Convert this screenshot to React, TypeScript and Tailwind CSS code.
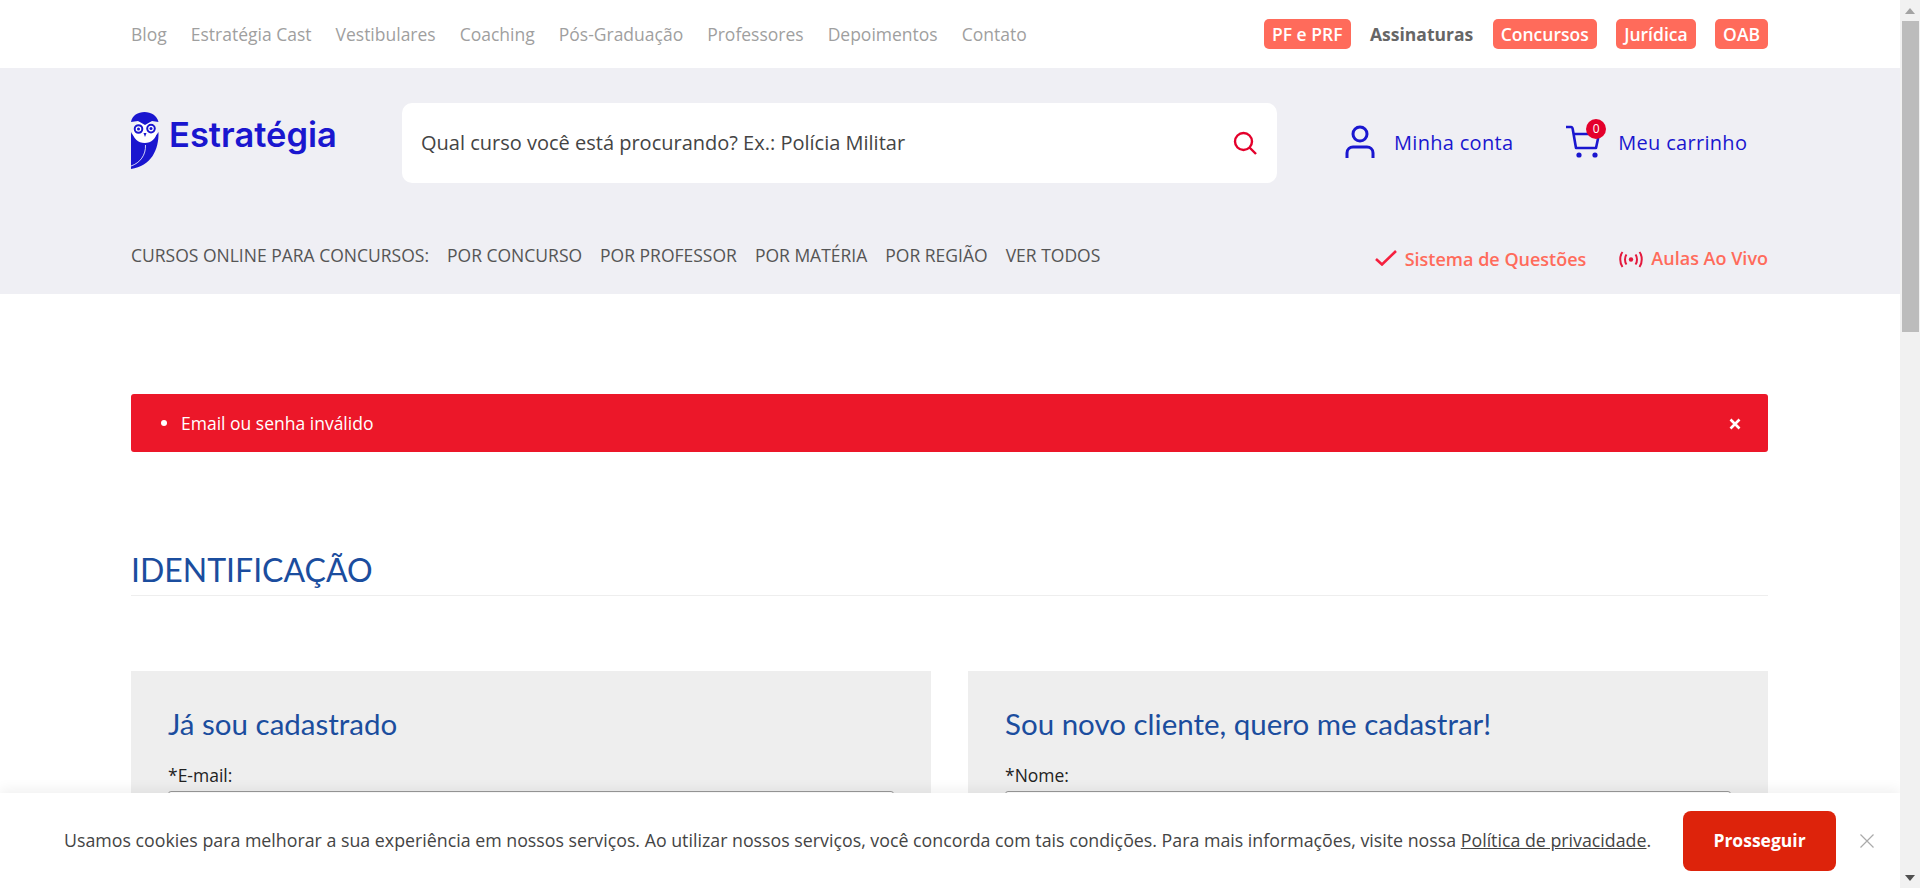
import React from "react";

const topLinks = ["Blog", "Estratégia Cast", "Vestibulares", "Coaching", "Pós-Graduação", "Professores", "Depoimentos", "Contato"];
const navLinks = ["POR CONCURSO", "POR PROFESSOR", "POR MATÉRIA", "POR REGIÃO", "VER TODOS"];

function Pill({ children }: { children: React.ReactNode }) {
  return <a className="flex h-[30px] items-center rounded-[5px] bg-[#ff6b5b] px-2 text-[17.5px] font-semibold text-white">{children}</a>;
}

function Owl() {
  return (
    <svg width="28" height="57" viewBox="0 0 28 57" className="shrink-0">
      <path d="M0 20 C4 30 22 30 27.5 20 C28 38 20 54 0 57 Z" fill="#1a16cf" />
      <ellipse cx="13.7" cy="20" rx="12" ry="11" fill="#fff" />
      <path d="M0 10 C1 3.5 7 0 13.5 0 C20 0 26 3.5 27.5 10 L21 9 L14 13 L7 9 Z" fill="#1a16cf" />
      <circle cx="7.5" cy="17" r="3.8" fill="#fff" stroke="#1a16cf" strokeWidth="2" />
      <circle cx="20" cy="16.6" r="3.8" fill="#fff" stroke="#1a16cf" strokeWidth="2" />
      <circle cx="7.5" cy="17" r="1.5" fill="#1a16cf" />
      <circle cx="20" cy="16.6" r="1.5" fill="#1a16cf" />
      <path d="M12.5 21 L14 25 L15.5 21 Z" fill="#1a16cf" />
      <path d="M14.5 33 C15 43 9 51 0 54" fill="none" stroke="#fff" strokeWidth="0.8" />
    </svg>
  );
}

function UserIcon() {
  return (
    <svg width="30" height="33" viewBox="0 0 30 33" fill="none" stroke="#1a16cf" strokeWidth="3">
      <circle cx="15" cy="9" r="7" />
      <path d="M2 33 V28 C2 24 5 22 8 22 H22 C25 22 28 24 28 28 V33" />
    </svg>
  );
}

function CartIcon() {
  return (
    <svg width="34" height="33" viewBox="0 0 34 33" fill="none" stroke="#1a16cf" strokeWidth="2.6">
      <path d="M0 2 H5 C6 2 6.5 3 6.7 4 L10 23 H30 L33 9 H8" strokeLinejoin="round" />
      <circle cx="13" cy="30" r="2.6" fill="#1a16cf" stroke="none" />
      <circle cx="29" cy="30" r="2.6" fill="#1a16cf" stroke="none" />
    </svg>
  );
}

function Field({ title, label }: { title: string; label: string }) {
  return (
    <div className="h-[260px] bg-[#eeeeee] px-[37px] pt-[33px]">
      <h2 className="font-['Lato',sans-serif] text-[29.5px] leading-[40px] text-[#1b4d9e]">{title}</h2>
      <label className="mb-[4px] mt-[19px] block text-[17.5px] leading-[24px] text-[#222]">{label}</label>
      <div className="h-[42px] rounded-[3px] border border-[#999] bg-white" />
    </div>
  );
}

export default function App() {
  return (
    <div className="flex h-[888px] w-full overflow-hidden bg-white font-['Open_Sans',sans-serif]">
      <div className="relative h-full min-w-0 flex-1 overflow-hidden">
        <div className="flex h-[68px] items-center justify-between pl-[131px] pr-[132px]">
          <nav className="flex gap-[24px] text-[17.5px] text-[#9f9f9f]">
            {topLinks.map((l) => (
              <a key={l}>{l}</a>
            ))}
          </nav>
          <div className="flex items-center gap-[19.5px]">
            <Pill>PF e PRF</Pill>
            <a className="text-[17.5px] font-bold text-[#666]">Assinaturas</a>
            <Pill>Concursos</Pill>
            <Pill>Jurídica</Pill>
            <Pill>OAB</Pill>
          </div>
        </div>

        <header className="h-[226px] bg-[#efeff4] pl-[131px] pr-[132px]">
          <div className="flex h-[174px] items-start pt-[35px]">
            <a className="flex w-[271px] items-start gap-[10px] pt-[9px]">
              <Owl />
              <span className="mt-[3px] font-['Inter',sans-serif] text-[34.5px] font-semibold leading-[40px] text-[#1a16cf]">Estratégia</span>
            </a>
            <div className="flex h-[80px] w-[875px] items-center justify-between rounded-[10px] bg-white pl-[19px] pr-[20px]">
              <span className="text-[20px] text-[#444]">Qual curso você está procurando? Ex.: Polícia Militar</span>
              <svg width="24" height="24" viewBox="0 0 24 24" fill="none" stroke="#e4002b" strokeWidth="2.4">
                <circle cx="10.5" cy="10.5" r="8.5" />
                <path d="M16.5 16.5 L23 23" />
              </svg>
            </div>
            <a className="ml-[68px] flex items-center gap-[19px] pt-[22px] text-[20px] font-medium tracking-[0.3px] text-[#1a16cf]">
              <UserIcon />
              <span className="mt-[2px]">Minha conta</span>
            </a>
            <a className="relative ml-[53px] flex items-center gap-[18px] pt-[22px] text-[20px] font-medium tracking-[0.3px] text-[#1a16cf]">
              <CartIcon />
              <span className="mt-[2px]">Meu carrinho</span>
              <span className="absolute left-[20px] top-[16px] flex h-5 w-5 items-center justify-center rounded-full bg-[#e4002b] text-xs font-normal tracking-normal text-white">0</span>
            </a>
          </div>
          <div className="flex items-center justify-between">
            <nav className="flex gap-[18px] pb-[8px] text-[17.5px] text-[#555]">
              <span>CURSOS ONLINE PARA CONCURSOS:</span>
              {navLinks.map((l) => (
                <a key={l}>{l}</a>
              ))}
            </nav>
            <div className="flex items-center text-[18px] font-semibold text-[#ff6b5b]">
              <svg width="22" height="16" viewBox="0 0 22 16" fill="none" stroke="#f5203e" strokeWidth="2.6" className="mb-[3px] mr-[8px]">
                <path d="M1 9 L7 14.5 L21 1" />
              </svg>
              <span>Sistema de Questões</span>
              <svg width="24" height="17" viewBox="0 0 24 17" fill="none" stroke="#e4183c" strokeWidth="2" className="ml-[33px] mr-[8px]">
                <circle cx="12" cy="8.5" r="2.2" fill="#e4183c" stroke="none" />
                <path d="M7.5 3.5 C5.5 6 5.5 11 7.5 13.5 M16.5 3.5 C18.5 6 18.5 11 16.5 13.5 M3.5 1 C0.5 5 0.5 12 3.5 16 M20.5 1 C23.5 5 23.5 12 20.5 16" />
              </svg>
              <span className="mb-[1px]">Aulas Ao Vivo</span>
            </div>
          </div>
        </header>

        <main className="pl-[131px] pr-[132px] pt-[100px]">
          <div className="flex h-[58px] items-center justify-between rounded-[3px] bg-[#ec1729] pl-[30px] pr-[27px] text-[17.5px] text-white">
            <div className="flex items-center gap-[14px]">
              <span className="h-[6px] w-[6px] rounded-full bg-white" />
              <span>Email ou senha inválido</span>
            </div>
            <svg width="12" height="12" viewBox="0 0 12 12" stroke="#fff" strokeWidth="2.6" className="mt-[2px]">
              <path d="M1.5 1.5 L10.5 10.5 M10.5 1.5 L1.5 10.5" />
            </svg>
          </div>
          <h1 className="mt-[95px] border-b border-[#eeeeee] pb-[3px] font-['Lato',sans-serif] text-[32px] font-normal leading-[45px] text-[#1b4d9e]">IDENTIFICAÇÃO</h1>
          <div className="mt-[75px] grid grid-cols-2 gap-[37px]">
            <Field title="Já sou cadastrado" label="*E-mail:" />
            <Field title="Sou novo cliente, quero me cadastrar!" label="*Nome:" />
          </div>
        </main>

        <div className="absolute bottom-0 left-0 right-0 flex h-[95px] items-center bg-white pl-[64px] shadow-[0_-4px_12px_rgba(0,0,0,0.06)]">
          <p className="w-[1619px] shrink-0 text-[17.8px] text-[#444]">
            Usamos cookies para melhorar a sua experiência em nossos serviços. Ao utilizar nossos serviços, você concorda com tais condições. Para mais informações, visite nossa <a className="underline">Política de privacidade</a>.
          </p>
          <button className="h-[60px] w-[153px] shrink-0 rounded-[8px] bg-[#dd230b] text-[17.5px] font-bold text-white">Prosseguir</button>
          <svg width="14" height="14" viewBox="0 0 14 14" stroke="#aaa" strokeWidth="1.2" className="ml-[24px] shrink-0">
            <path d="M0.5 0.5 L13.5 13.5 M13.5 0.5 L0.5 13.5" />
          </svg>
        </div>
      </div>

      <div className="flex h-full w-5 shrink-0 flex-col items-center bg-[#f1f1f1]">
        <svg width="20" height="21" viewBox="0 0 20 21" className="shrink-0"><path d="M5 14 L10 8 L15 14 Z" fill="#a3a3a3" /></svg>
        <div className="h-[311px] w-[17px] shrink-0 bg-[#bcbcbc]" />
        <div className="flex-1" />
        <svg width="20" height="20" viewBox="0 0 20 20" className="shrink-0"><path d="M5 7 L10 13 L15 7 Z" fill="#505050" /></svg>
      </div>
    </div>
  );
}
